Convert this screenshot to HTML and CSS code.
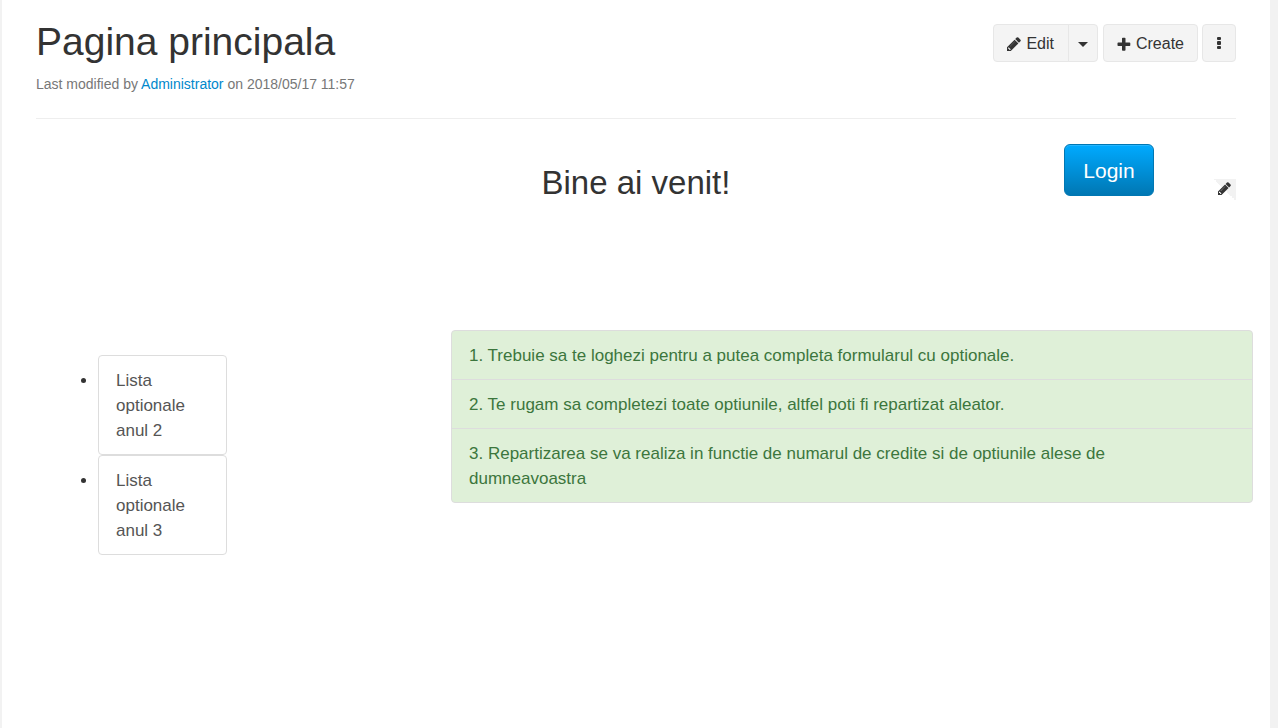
FILE: index.html
```html
<!DOCTYPE html>
<html lang="ro">
<head>
<meta charset="utf-8">
<title>Pagina principala</title>
<link rel="stylesheet" href="styles.css">
</head>
<body>
<svg class="symbols" width="0" height="0" aria-hidden="true">
  <symbol id="pencil" viewBox="0 0 1536 1536">
    <path fill-rule="evenodd" d="M340 1420l70-70-225-225-70 70v90h135v135h90zM870 500l-20-10-540 540 20 20zM832 288l416 416-832 832H0v-416zM1515 384q0 53-37 90l-166 166-416-416 166-165q36-38 90-38 53 0 91 38l235 234q37 39 37 91z"/>
  </symbol>
</svg>
<main class="page">
  <header class="page-header">
    <div>
      <h1 class="title">Pagina principala</h1>
      <p class="modified">Last modified by <a class="link" href="#">Administrator</a> on 2018/05/17 11:57</p>
    </div>
    <div class="actions">
      <div class="split">
        <button class="btn btn-edit" type="button"><svg class="icon" aria-hidden="true"><use href="#pencil"/></svg>Edit</button>
        <button class="btn btn-toggle" type="button" aria-label="Edit options"><span class="caret"></span></button>
      </div>
      <button class="btn" type="button"><svg class="icon" viewBox="0 0 14 14" aria-hidden="true"><path d="M5 1.500q0-.8.8-.8h1.900q.8 0 .8.8V5.500h4q.8 0 .8.800v1.900q0 .8-.8.800H8.500v4q0 .8-.8.800H5.800q-.8 0-.8-.800V9H1.300q-.8 0-.8-.8V6.300q0-.8.8-.8H5z"/></svg>Create</button>
      <button class="btn btn-more" type="button" aria-label="More actions"><svg class="dots" viewBox="0 0 4 14" aria-hidden="true"><rect y="1" width="4" height="3" rx="1"/><rect y="5" width="4" height="4" rx="1"/><rect y="10" width="4" height="3" rx="1"/></svg></button>
    </div>
  </header>
  <section class="welcome">
    <h2 class="greeting">Bine ai venit!</h2>
    <div class="welcome-actions">
      <button class="login" type="button">Login</button>
      <button class="edit-section" type="button" aria-label="Edit section"><svg class="icon-small" aria-hidden="true"><use href="#pencil"/></svg></button>
    </div>
  </section>
  <section class="content">
    <ul class="lists">
      <li><a class="list-link" href="#">Lista optionale anul 2</a></li>
      <li><a class="list-link" href="#">Lista optionale anul 3</a></li>
    </ul>
    <ul class="notes">
      <li class="note">1. Trebuie sa te loghezi pentru a putea completa formularul cu optionale.</li>
      <li class="note">2. Te rugam sa completezi toate optiunile, altfel poti fi repartizat aleator.</li>
      <li class="note">3. Repartizarea se va realiza in functie de numarul de credite si de optiunile alese de dumneavoastra</li>
    </ul>
  </section>
</main>
</body>
</html>
```

FILE: styles.css
```css
* { box-sizing: border-box; }

body {
  margin: 0;
  background: #f2f2f2;
  color: #333;
  font: 17px/25px "Liberation Sans", Arial, sans-serif;
}

h1, h2, p, ul { margin: 0; padding: 0; font-weight: 400; }

button { margin: 0; font-family: inherit; cursor: pointer; }

.symbols { position: absolute; }

.page {
  min-height: 100vh;
  margin: 0 8px 0 2px;
  padding: 0 34px;
  background: #fff;
}

.page-header {
  display: flex;
  justify-content: space-between;
  align-items: flex-start;
  padding: 20px 0 24px;
  border-bottom: 1px solid #eee;
}

.title { font-size: 39px; line-height: 44px; }

.modified {
  padding-top: 10px;
  color: #777;
  font-size: 14px;
  line-height: 20px;
}

.link { color: #0088cc; text-decoration: none; }

.actions { display: flex; gap: 4px; padding-top: 4px; }

.split { display: flex; }

.btn {
  display: flex;
  align-items: center;
  justify-content: center;
  gap: 5px;
  height: 38px;
  padding: 2px 13px 0;
  border: 1px solid #e7e7e7;
  border-radius: 4px;
  background: #f4f4f4;
  color: #333;
  font-size: 16px;
}

.btn-edit { padding-right: 14px; }

.split .btn:first-child { border-radius: 4px 0 0 4px; }

.split .btn-toggle {
  width: 30px;
  margin-left: -1px;
  padding: 2px 0 0;
  border-radius: 0 4px 4px 0;
}

.actions > .btn { margin-left: 1px; }

.actions > .btn-more { width: 34px; margin-left: 0; padding: 0; }

.icon { width: 14px; height: 14px; fill: #333; }

.dots { width: 4px; height: 14px; fill: #333; }

.caret {
  border-top: 5px solid #333;
  border-left: 5px solid transparent;
  border-right: 5px solid transparent;
}

.welcome {
  display: grid;
  grid-template-columns: 1fr auto 1fr;
  align-items: start;
  padding-top: 25px;
}

.greeting {
  grid-column: 2;
  padding-top: 20px;
  font-size: 33px;
  line-height: 38px;
}

.welcome-actions { display: flex; justify-content: flex-end; gap: 60px; }

.login {
  width: 90px;
  height: 52px;
  padding: 2px 0 0;
  border: 1px solid #0077b3;
  border-radius: 6px;
  background: linear-gradient(#00aaff, #0077b3);
  box-shadow: inset 0 1px 0 rgba(255, 255, 255, 0.15);
  color: #fff;
  font-size: 21px;
}

.edit-section {
  display: flex;
  align-items: flex-start;
  width: 22px;
  height: 22px;
  margin-top: 35px;
  padding: 3px 4px;
  border: 0;
  background: linear-gradient(to top right, transparent 50%, #f2f2f2 50%);
}

.icon-small { width: 13px; height: 13px; fill: #333; }

.content {
  display: grid;
  grid-template-columns: 415px 1fr;
  align-items: start;
  margin-right: -17px;
  padding-top: 128px;
}

.lists { width: 191px; padding: 25px 0 0 62px; }

.list-link {
  display: block;
  padding: 12px 17px 11px;
  border: 1px solid #ddd;
  border-radius: 4px;
  color: #555;
  text-decoration: none;
}

.notes {
  overflow: hidden;
  border: 1px solid #ddd;
  border-radius: 4px;
  background: #dff0d8;
  list-style: none;
}

.note {
  padding: 12px 34px 11px 17px;
  color: #3c763d;
}

.note + .note { border-top: 1px solid #ddd; }
```
